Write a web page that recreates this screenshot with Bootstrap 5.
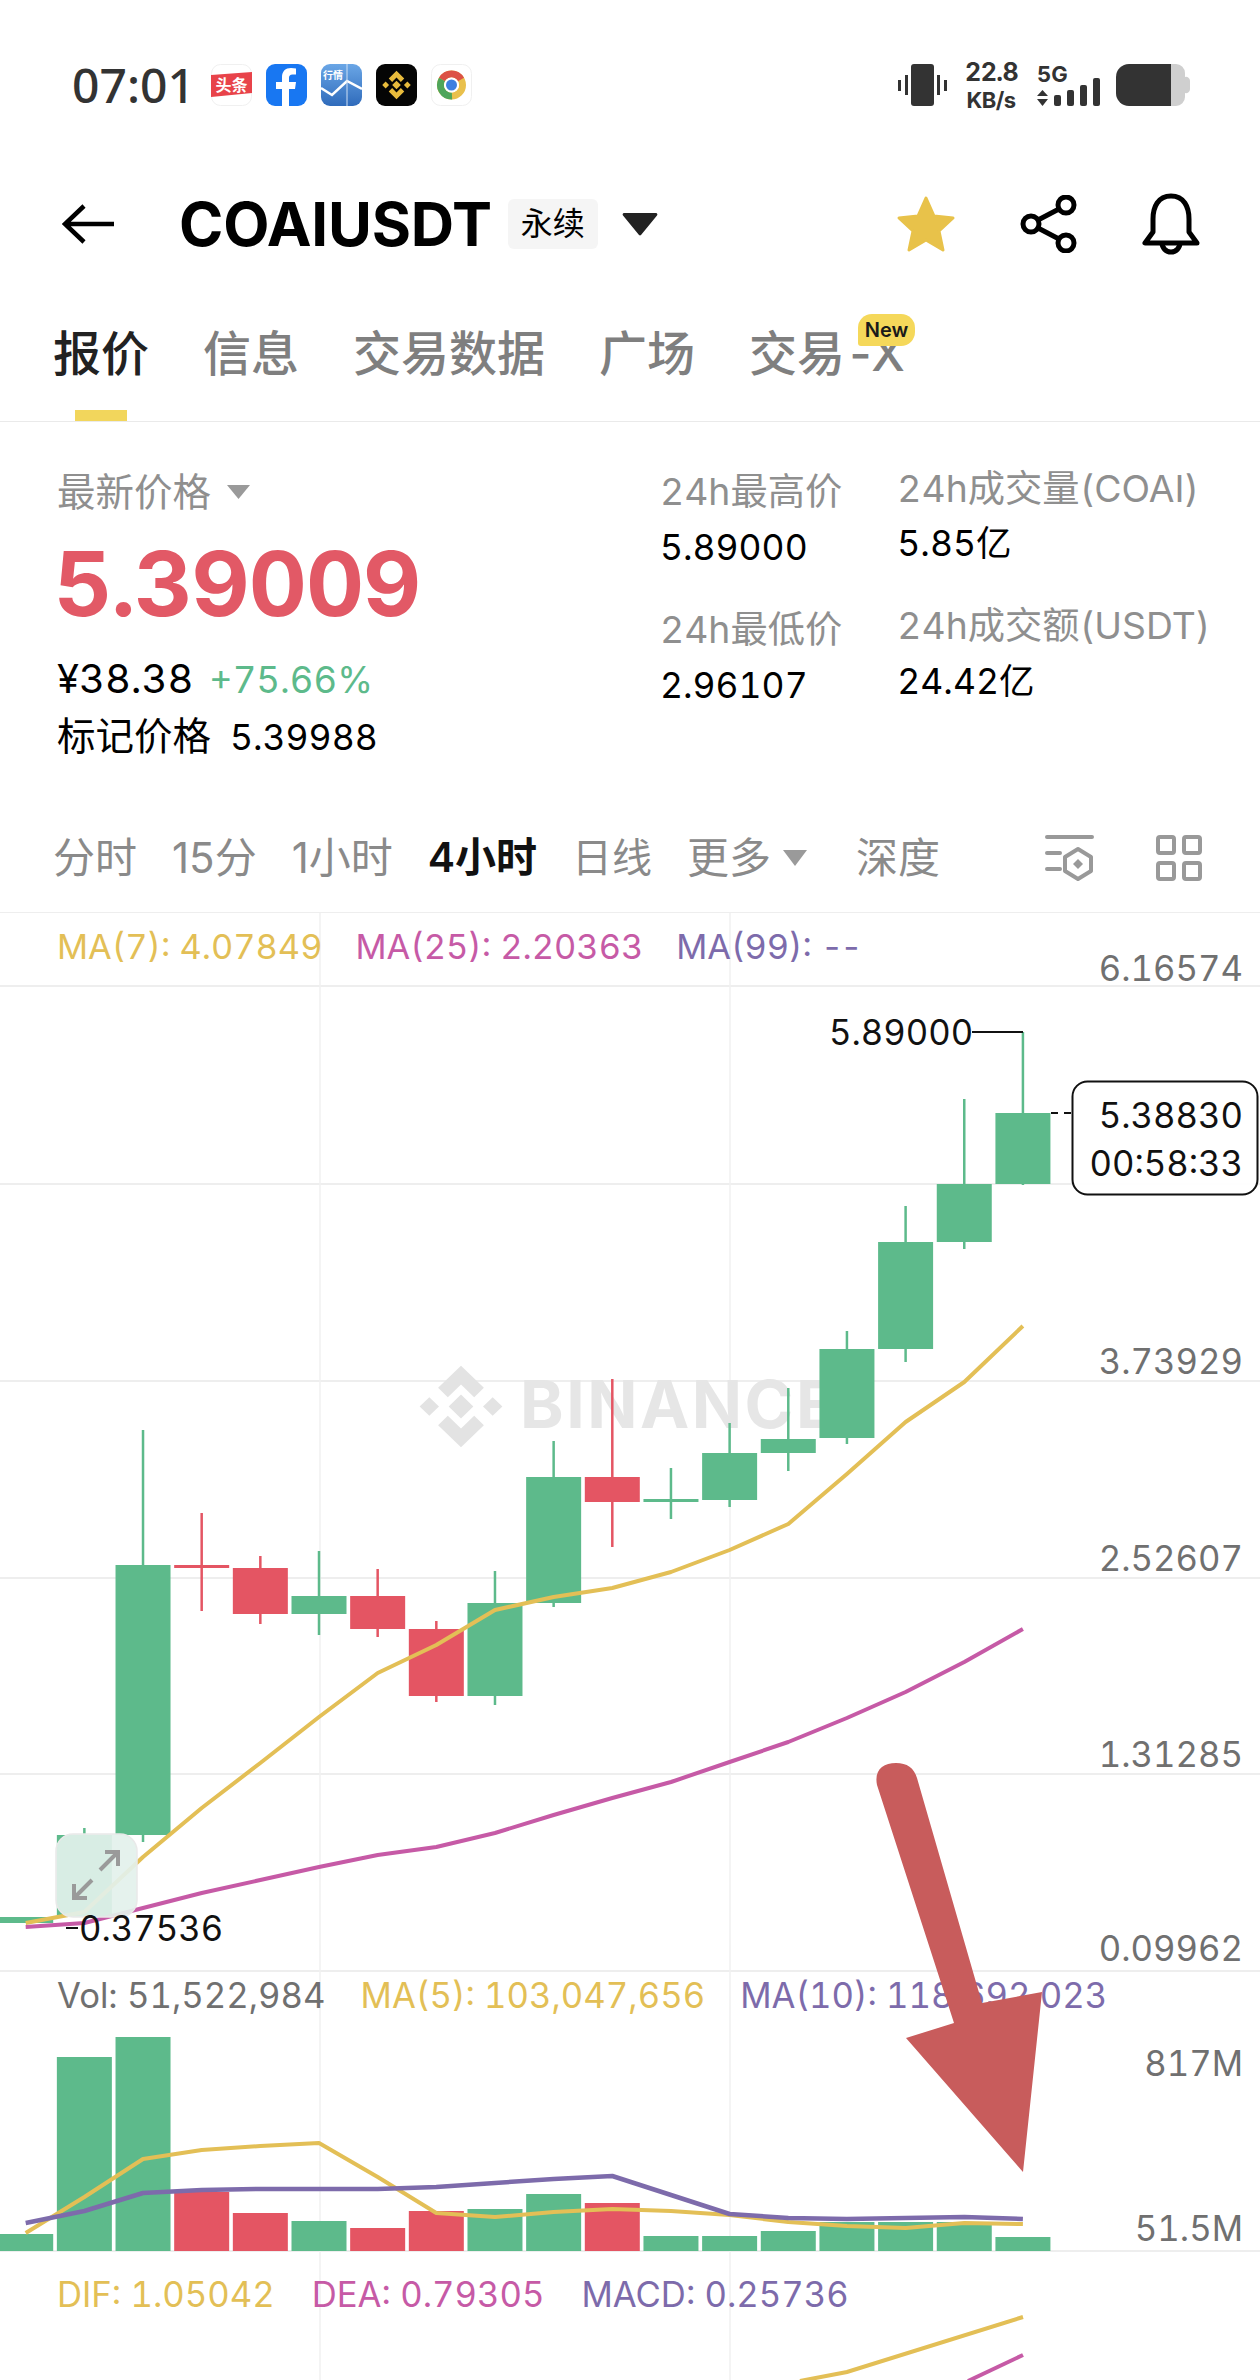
<!DOCTYPE html>
<html lang="zh-CN">
<head>
  <meta charset="UTF-8" />
  <title>COAIUSDT</title>
  <link href="https://cdn.jsdelivr.net/npm/bootstrap@5.3.3/dist/css/bootstrap.min.css" rel="stylesheet" />
  <style>
    html, body { margin: 0; background: #fff; }
    body {
      width: 1260px;
      height: 2380px;
      overflow: hidden;
      font-family: Inter, "Noto Sans CJK SC", sans-serif;
      font-variant-numeric: tabular-nums;
      color: #000;
    }
    svg { display: block; flex: none; }

    /* status bar */
    .status-bar { height: 170px; padding: 0 70px 0 72px; color: #333; }
    .status-time { font-family: "Noto Sans", sans-serif; font-size: 48px; font-weight: 500; line-height: 1; width: 139px; }
    .status-apps { gap: 14px; }
    .status-speed { width: 52px; margin: 0 20px 0 18px; font-weight: 700; text-align: center; line-height: 1; }
    .speed-num { font-size: 25px; letter-spacing: -.5px; }
    .speed-unit { font-size: 22px; margin-top: 4px; letter-spacing: -.5px; white-space: nowrap; }
    .net-type { font-size: 22px; font-weight: 700; line-height: 20px; margin-bottom: -7px; }

    /* title row */
    .title-row { height: 108px; padding: 0 60px 0 62px; }
    .pair-name { font-size: 60px; font-weight: 700; letter-spacing: -.2px; margin-left: 65px; line-height: 1; }
    .pair-tag { background: #f5f5f5; border-radius: 6px; font-size: 32px; width: 90px; height: 50px; margin-left: 16px; }
    .title-actions { gap: 64px; }

    /* tabs */
    .tab-row { height: 144px; padding: 8px 0 0 53px; gap: 54px; border-bottom: 1px solid #eaeaea; }
    .tab-item { font-size: 48px; color: #7f7f7f; line-height: 1; position: relative; white-space: nowrap; font-weight: 500; }
    .tab-item.active { color: #222; }
    .tab-item.active::after { content: ""; position: absolute; left: 22px; width: 52px; height: 11px; bottom: -43px; background: #f2d65c; }
    .tab-dash { letter-spacing: -5px; }
    .new-flag {
      position: absolute; left: 109px; top: -16px; width: 57px; height: 32px; border-radius: 14px 14px 14px 3px;
      background: #f5d85a; color: #1a1a1a; font-size: 20px; font-weight: 600; text-align: center; line-height: 32px; letter-spacing: 0;
    }

    /* price block */
    .price-block { height: 381px; padding: 48px 0 0 57px; }
    .price-left { width: 603px; }
    .line-44 { height: 44px; line-height: 44px; font-size: 35.5px; white-space: nowrap; }
    .label-wide { font-size: 38.5px; }
    .label-stat { font-size: 37.3px; }
    .muted-text { color: #8f8f8f; }
    .last-price { font-size: 90px; font-weight: 700; color: #e25966; line-height: 90px; height: 90px; margin: 25px 0 0 -3px; letter-spacing: -1px; }
    .rise-text { color: #5dba8b; font-size: 36.5px; margin-left: 6px; }
    .yuan-text { font-size: 40px; }
    .mark-value { margin-left: 19px; font-size: 35.5px; }
    .stat-col-two { margin-left: 55px; margin-top: -3px; }
    .mt-11 { margin-top: 11px; }
    .mt-12 { margin-top: 12px; }
    .mt-13 { margin-top: 13px; }
    .mt-28 { margin-top: 28px; }
    .mt-38 { margin-top: 38px; }

    /* timeframe row */
    .time-row { height: 110px; padding: 0 58px 0 53px; gap: 35px; border-bottom: 1px solid #eeeeee; }
    .time-item { font-size: 42px; color: #8a8a8a; line-height: 1; white-space: nowrap; font-variant-numeric: proportional-nums; }
    .time-item.active { color: #111; font-weight: 600; font-size: 41px; }
    .time-narrow { font-size: 40px; }
    .more-item { gap: 12px; }
    .depth-item { margin-left: 14px; }
    .time-tools { gap: 62px; }

    /* chart */
    .chart-area { position: relative; height: 1467px; overflow: hidden; }
    .chart-layer { position: absolute; left: 0; top: 0; }
    .chart-legend { position: relative; padding-left: 57px; gap: 35px; font-size: 34.7px; line-height: 44px; white-space: nowrap; }
    .legend-ma { height: 68px; padding-top: 12px; gap: 33px; font-size: 34.4px; }
    .legend-vol { margin-top: 992px; height: 280px; }
    .legend-macd { margin-top: 19px; gap: 37px; }
    .legend-dash { letter-spacing: -3px; }
    .c-yellow { color: #e3bf56; }
    .c-pink { color: #c65aa6; }
    .c-purple { color: #7d6bab; }
    .c-gray { color: #707070; }
    .axis-label { font-size: 34.7px; fill: #707070; text-anchor: end; font-family: Inter, sans-serif; font-variant-numeric: tabular-nums; }
    .price-label { font-size: 34.7px; fill: #111; font-family: Inter, sans-serif; font-variant-numeric: tabular-nums; }
    .water-text { font-size: 66px; font-weight: 700; fill: #e6e6e6; font-family: Inter, sans-serif; letter-spacing: 2.500px; }
  </style>
</head>
<body>

  <!-- status bar -->
  <div class="status-bar d-flex align-items-center">
    <div class="status-time">07:01</div>
    <div class="status-apps d-flex">
      <svg width="41" height="42" viewBox="0 0 41 42">
        <rect x=".5" y=".5" width="40" height="41" rx="9" fill="#fff" stroke="#f0f0f0"/>
        <polygon points="0,11 41,8 41,29 0,33" fill="#e8434a"/>
        <text x="20.5" y="27" font-size="16" font-weight="700" fill="#fff" text-anchor="middle" font-family="Noto Sans CJK SC">头条</text>
      </svg>
      <svg width="41" height="42" viewBox="0 0 41 42">
        <rect width="41" height="42" rx="9" fill="#1877f2"/>
        <path d="M23 42V25h6l1-7h-7v-4c0-2.200 1-3.500 3.500-3.500H30V4.500C28.500 4.300 26.800 4 25 4c-5.500 0-9 3.300-9 9v5h-6v7h6v17z" fill="#fff"/>
      </svg>
      <svg width="41" height="42" viewBox="0 0 41 42">
        <defs><linearGradient id="appBlue" x1="0" y1="0" x2="0" y2="1"><stop offset="0" stop-color="#6aa6e6"/><stop offset="1" stop-color="#2f6bbb"/></linearGradient></defs>
        <rect width="41" height="42" rx="9" fill="url(#appBlue)"/>
        <polyline points="0,24 11,31 26,17 41,25" fill="none" stroke="#fff" stroke-width="2.500"/>
        <line x1="26" y1="0" x2="26" y2="42" stroke="#cfe0f5" stroke-width="1"/>
        <text x="12" y="15" font-size="10" font-weight="700" fill="#fff" text-anchor="middle" font-family="Noto Sans CJK SC">行情</text>
      </svg>
      <svg width="41" height="42" viewBox="0 0 41 42">
        <rect width="41" height="42" rx="9" fill="#050505"/>
        <g fill="#e8bb3c" transform="translate(5 5.500) scale(.31)">
          <polygon points="50,36 64,50 50,64 36,50"/>
          <polygon points="15,39 26,50 15,61 4,50"/>
          <polygon points="85,39 96,50 85,61 74,50"/>
          <polygon points="50,4 75,29 64,40 50,26 36,40 25,29"/>
          <polygon points="50,96 75,71 64,60 50,74 36,60 25,71"/>
        </g>
      </svg>
      <svg width="41" height="42" viewBox="0 0 41 42">
        <rect x=".5" y=".5" width="40" height="41" rx="9" fill="#fff" stroke="#f0f0f0"/>
        <circle cx="20.500" cy="21" r="11" fill="none" stroke="#e9c04c" stroke-width="7"/>
        <path d="M11 15.500A11 11 0 0 1 30 15.500" fill="none" stroke="#dc5245" stroke-width="7"/>
        <path d="M11 15.500A11 11 0 0 0 21 32" fill="none" stroke="#4fa55a" stroke-width="7"/>
        <circle cx="20.500" cy="21" r="7.500" fill="#fff"/>
        <circle cx="20.500" cy="21" r="5.500" fill="#3d7fe0"/>
      </svg>
    </div>
    <div class="ms-auto d-flex align-items-center">
      <svg width="49" height="42" viewBox="0 0 49 42" fill="#333">
        <rect x="13" y="0" width="23" height="42" rx="3"/>
        <rect x="7" y="11" width="3" height="20"/><rect x="39" y="11" width="3" height="20"/>
        <rect x="0" y="16" width="3" height="11"/><rect x="46" y="16" width="3" height="11"/>
      </svg>
      <div class="status-speed">
        <div class="speed-num">22.8</div>
        <div class="speed-unit">KB/s</div>
      </div>
      <div>
        <div class="net-type">5G</div>
        <svg width="63" height="29" viewBox="0 0 63 29" fill="#333">
          <polygon points="5.500,13 11,19 0,19"/><polygon points="5.500,29 11,22 0,22"/>
          <rect x="17" y="18" width="7" height="11" rx="2"/>
          <rect x="30" y="13" width="7" height="16" rx="2"/>
          <rect x="43" y="8" width="7" height="21" rx="2"/>
          <rect x="56" y="1" width="7" height="28" rx="2"/>
        </svg>
      </div>
      <svg class="ms-3" width="74" height="42" viewBox="0 0 74 42">
        <path d="M50 0h10a9 9 0 0 1 9 9v4a4 4 0 0 1 5 4v8a4 4 0 0 1-5 4v4a9 9 0 0 1-9 9H50z" fill="#cfcfcf"/>
        <path d="M13 0h42v42H13A13 13 0 0 1 0 29V13A13 13 0 0 1 13 0z" fill="#333"/>
      </svg>
    </div>
  </div>

  <!-- title row -->
  <div class="title-row d-flex align-items-center">
    <svg width="52" height="40" viewBox="0 0 52 40" fill="none" stroke="#000" stroke-width="4.500">
      <path d="M52 20H3M22 2 3 20l19 18"/>
    </svg>
    <div class="pair-name">COAIUSDT</div>
    <div class="pair-tag d-flex align-items-center justify-content-center">永续</div>
    <svg class="ms-4" width="36" height="24" viewBox="0 0 36 24"><path d="M2 1h32a1.500 1.500 0 0 1 1 2.500L19 23a1.500 1.500 0 0 1-2 0L1 3.500A1.500 1.500 0 0 1 2 1z" fill="#222"/></svg>
    <div class="title-actions ms-auto d-flex align-items-center">
      <svg width="60" height="58" viewBox="0 0 60 58"><polygon points="30,3 38,21 57,23 43,36 47,55 30,45 13,55 17,36 3,23 22,21" fill="#e8c24a" stroke="#e8c24a" stroke-width="3" stroke-linejoin="round"/></svg>
      <svg width="58" height="58" viewBox="0 0 58 58" fill="none" stroke="#000" stroke-width="5">
        <circle cx="46" cy="10" r="8"/><circle cx="46" cy="48" r="8"/><circle cx="11" cy="29" r="8"/>
        <path d="M18 25 39 14M18 33l21 11"/>
      </svg>
      <svg width="58" height="62" viewBox="0 0 58 62" fill="none" stroke="#000" stroke-width="5" stroke-linejoin="round">
        <path d="M29 3C16 3 11 14 11 26v13L3 50h52l-8-11V26C47 14 42 3 29 3z"/>
        <path d="M20 50a9 9 0 0 0 18 0"/>
      </svg>
    </div>
  </div>

  <!-- tabs -->
  <div class="tab-row d-flex align-items-center">
    <div class="tab-item active">报价</div>
    <div class="tab-item">信息</div>
    <div class="tab-item">交易数据</div>
    <div class="tab-item">广场</div>
    <div class="tab-item">交易<span class="tab-dash">-</span>X<span class="new-flag">New</span></div>
  </div>

  <!-- price block -->
  <div class="price-block d-flex">
    <div class="price-left">
      <div class="line-44 label-wide muted-text d-flex align-items-center gap-3">最新价格
        <svg width="23" height="14" viewBox="0 0 23 14"><polygon points="0,0 23,0 11.500,14" fill="#9a9a9a"/></svg>
      </div>
      <div class="last-price">5.39009</div>
      <div class="line-44 mt-28"><span class="yuan-text">¥38.38</span> <span class="rise-text">+75.66%</span></div>
      <div class="line-44 label-wide mt-13">标记价格<span class="mark-value">5.39988</span></div>
    </div>
    <div>
      <div class="line-44 label-stat muted-text">24h最高价</div>
      <div class="line-44 mt-12">5.89000</div>
      <div class="line-44 label-stat muted-text mt-38">24h最低价</div>
      <div class="line-44 mt-12">2.96107</div>
    </div>
    <div class="stat-col-two">
      <div class="line-44 label-stat muted-text">24h成交量(COAI)</div>
      <div class="line-44 mt-11">5.85亿</div>
      <div class="line-44 label-stat muted-text mt-38">24h成交额(USDT)</div>
      <div class="line-44 mt-12">24.42亿</div>
    </div>
  </div>

  <!-- timeframes -->
  <div class="time-row d-flex align-items-center">
    <div class="time-item">分时</div>
    <div class="time-item">15分</div>
    <div class="time-item">1小时</div>
    <div class="time-item active">4小时</div>
    <div class="time-item time-narrow">日线</div>
    <div class="time-item more-item d-flex align-items-center">更多
      <svg width="24" height="16" viewBox="0 0 24 16"><polygon points="0,0 24,0 12,16" fill="#9a9a9a"/></svg>
    </div>
    <div class="time-item depth-item">深度</div>
    <div class="time-tools ms-auto d-flex align-items-center">
      <svg width="49" height="46" viewBox="0 0 49 46" fill="none" stroke="#999" stroke-width="4" stroke-linecap="round">
        <path d="M2 2h45M2 18h13M2 34h13"/>
        <polygon points="33,14 46,22 46,36 33,44 20,36 20,22" stroke-linejoin="round"/>
        <polygon points="33,24 38,29 33,34 28,29" fill="#999" stroke="none"/>
      </svg>
      <svg width="46" height="46" viewBox="0 0 46 46" fill="none" stroke="#999" stroke-width="4">
        <rect x="2" y="2" width="16" height="16" rx="2"/><rect x="28" y="2" width="16" height="16" rx="2"/>
        <rect x="2" y="28" width="16" height="16" rx="2"/><rect x="28" y="28" width="16" height="16" rx="2"/>
      </svg>
    </div>
  </div>

  <!-- chart: page y minus 913 = local y -->
  <div class="chart-area">
    <svg id="chartSvg" class="chart-layer" width="1260" height="1467" viewBox="0 913 1260 1467"></svg>

    <div class="chart-legend legend-ma d-flex">
      <span class="c-yellow">MA(7): 4.07849</span>
      <span class="c-pink">MA(25): 2.20363</span>
      <span class="c-purple">MA(99): <span class="legend-dash">--</span></span>
    </div>
    <div class="chart-legend legend-vol d-flex">
      <span class="c-gray">Vol: 51,522,984</span>
      <span class="c-yellow">MA(5): 103,047,656</span>
      <span class="c-purple">MA(10): 118,692,023</span>
    </div>
    <div class="chart-legend legend-macd d-flex">
      <span class="c-yellow">DIF: 1.05042</span>
      <span class="c-pink">DEA: 0.79305</span>
      <span class="c-purple">MACD: 0.25736</span>
    </div>

    <!-- annotation arrow drawn over the screenshot -->
    <svg class="chart-layer" width="1260" height="1467" viewBox="0 913 1260 1467">
      <path d="M877 1785C874 1770 883 1763 896 1763C907 1763 914 1768 917 1778L982 2003L1042 1992L1023 2172L906 2038L954 2023Z" fill="#c85c5c"/>
    </svg>
  </div>

  <script src="https://cdn.jsdelivr.net/npm/bootstrap@5.3.3/dist/js/bootstrap.bundle.min.js"></script>
  <script>
    const GREEN = '#5dba8b', RED = '#e45563', YELLOW = '#e3bf56', PINK = '#c65aa6', PURPLE = '#7d6bab';
    const cx = i => 25.7 + 58.66 * i;

    // [open-side top, bottom, wick top, wick bottom, colour]
    const candles = [
      [1917, 1923, 1917, 1923, GREEN], [1835, 1917, 1828, 1917, GREEN], [1565, 1835, 1430, 1842, GREEN],
      [1565, 1568, 1513, 1611, RED],   [1568, 1614, 1556, 1624, RED],   [1596, 1614, 1551, 1635, GREEN],
      [1596, 1629, 1569, 1637, RED],   [1629, 1696, 1621, 1702, RED],   [1603, 1696, 1571, 1705, GREEN],
      [1477, 1603, 1441, 1607, GREEN], [1477, 1502, 1379, 1547, RED],   [1499, 1502, 1468, 1519, GREEN],
      [1453, 1500, 1423, 1507, GREEN], [1439, 1453, 1388, 1471, GREEN], [1349, 1438, 1331, 1444, GREEN],
      [1242, 1349, 1206, 1362, GREEN], [1184, 1242, 1099, 1249, GREEN], [1113, 1184, 1032, 1185, GREEN]
    ];
    const volTops = [
      [2234, GREEN], [2057, GREEN], [2037, GREEN], [2192, RED], [2213, RED], [2221, GREEN],
      [2228, RED], [2211, RED], [2209, GREEN], [2194, GREEN], [2203, RED], [2236, GREEN],
      [2236, GREEN], [2231, GREEN], [2222, GREEN], [2222, GREEN], [2222, GREEN], [2237, GREEN]
    ];
    const ma7 = [1923, 1912, 1857, 1808, 1763, 1717, 1673, 1645, 1610, 1597, 1588, 1572, 1550, 1524, 1474, 1422, 1382, 1326];
    const ma25 = [1927, 1923, 1908, 1893, 1880, 1867, 1855, 1847, 1833, 1815, 1798, 1782, 1762, 1742, 1718, 1692, 1662, 1629];
    const volMa5 = [2233, 2197, 2159, 2150, 2146, 2143, 2177, 2213, 2217, 2212, 2209, 2211, 2215, 2222, 2226, 2228, 2223, 2224];
    const volMa10 = [2223, 2211, 2193, 2190, 2189, 2189, 2189, 2187, 2183, 2179, 2176, 2195, 2214, 2218, 2219, 2218, 2217, 2219];
    const axis = [['6.16574', 968], ['3.73929', 1361], ['2.52607', 1558], ['1.31285', 1754], ['0.09962', 1948], ['817M', 2063], ['51.5M', 2228]];

    const poly = (ys, color, w) =>
      `<polyline points="${ys.map((y, i) => cx(i).toFixed(1) + ',' + y).join(' ')}" fill="none" stroke="${color}" stroke-width="${w}" stroke-linejoin="round"/>`;

    let s = '';
    [986, 1184, 1381, 1578, 1774, 1971, 2251].forEach(y => { s += `<line x1="0" x2="1260" y1="${y}" y2="${y}" stroke="#eeeeee" stroke-width="2"/>`; });
    [320, 730].forEach(x => { s += `<line x1="${x}" x2="${x}" y1="913" y2="2380" stroke="#f0f0f0" stroke-width="1.500"/>`; });

    // watermark
    s += `<g fill="#e3e3e3" transform="translate(417 1364) scale(.88 .85)">
      <polygon points="50,36 64,50 50,64 36,50"/><polygon points="14,39 25,50 14,61 3,50"/><polygon points="86,39 97,50 86,61 75,50"/>
      <polygon points="50,2 76,28 65,39 50,24 35,39 24,28"/><polygon points="50,98 76,72 65,61 50,76 35,61 24,72"/></g>`;
    s += `<text class="water-text" x="520" y="1428">BINANCE</text>`;

    // candles
    candles.forEach(([top, bottom, wt, wb, color], i) => {
      const x = cx(i);
      s += `<line x1="${x}" x2="${x}" y1="${wt}" y2="${wb}" stroke="${color}" stroke-width="2.500"/>`;
      const left = i === 0 ? 0 : x - 27.5;
      const w = i === 0 ? x + 27.5 : 55;
      s += `<rect x="${left}" y="${top}" width="${w}" height="${bottom - top}" fill="${color}"/>`;
    });

    // volume bars
    volTops.forEach(([top, color], i) => {
      const left = i === 0 ? 0 : cx(i) - 27.5;
      const w = i === 0 ? cx(i) + 27.5 : 55;
      s += `<rect x="${left}" y="${top}" width="${w}" height="${2251 - top}" fill="${color}"/>`;
    });

    s += poly(ma7, YELLOW, 4) + poly(ma25, PINK, 4) + poly(volMa5, YELLOW, 4) + poly(volMa10, PURPLE, 4.5);
    s += `<polyline points="800,2381 847,2372 1023,2317" fill="none" stroke="${YELLOW}" stroke-width="4"/>`;
    s += `<polyline points="968,2381 1023,2355" fill="none" stroke="${PINK}" stroke-width="4"/>`;

    // expand button
    s += `<rect x="56" y="1834" width="81" height="83" rx="17" fill="#e3f1eb" fill-opacity=".92" stroke="#e9e9e9" stroke-width="1.500"/>`;
    s += `<path d="M100 1870 118 1852M105 1852h13v14M92 1880 74 1898M87 1898H74v-14" fill="none" stroke="#9a9a9a" stroke-width="4"/>`;

    // high, low and last price labels
    s += `<text class="price-label" x="829" y="1045">5.89000</text>`;
    s += `<line x1="972" x2="1023" y1="1032" y2="1032" stroke="#111" stroke-width="2"/>`;
    s += `<text class="price-label" x="79" y="1941">0.37536</text>`;
    s += `<line x1="66" x2="78" y1="1928" y2="1928" stroke="#111" stroke-width="2"/>`;
    s += `<line x1="1051" x2="1073" y1="1113" y2="1113" stroke="#111" stroke-width="2" stroke-dasharray="7 6"/>`;
    s += `<rect x="1072.500" y="1081.500" width="185" height="113" rx="15" fill="#fff" fill-opacity=".93" stroke="#111" stroke-width="2"/>`;
    s += `<text class="price-label" x="1243" y="1128" text-anchor="end">5.38830</text>`;
    s += `<text class="price-label" x="1243" y="1176" text-anchor="end">00:58:33</text>`;

    axis.forEach(([t, y]) => { s += `<text class="axis-label" x="1243" y="${y + 13}">${t}</text>`; });

    document.getElementById('chartSvg').innerHTML = s;
  </script>
</body>
</html>
